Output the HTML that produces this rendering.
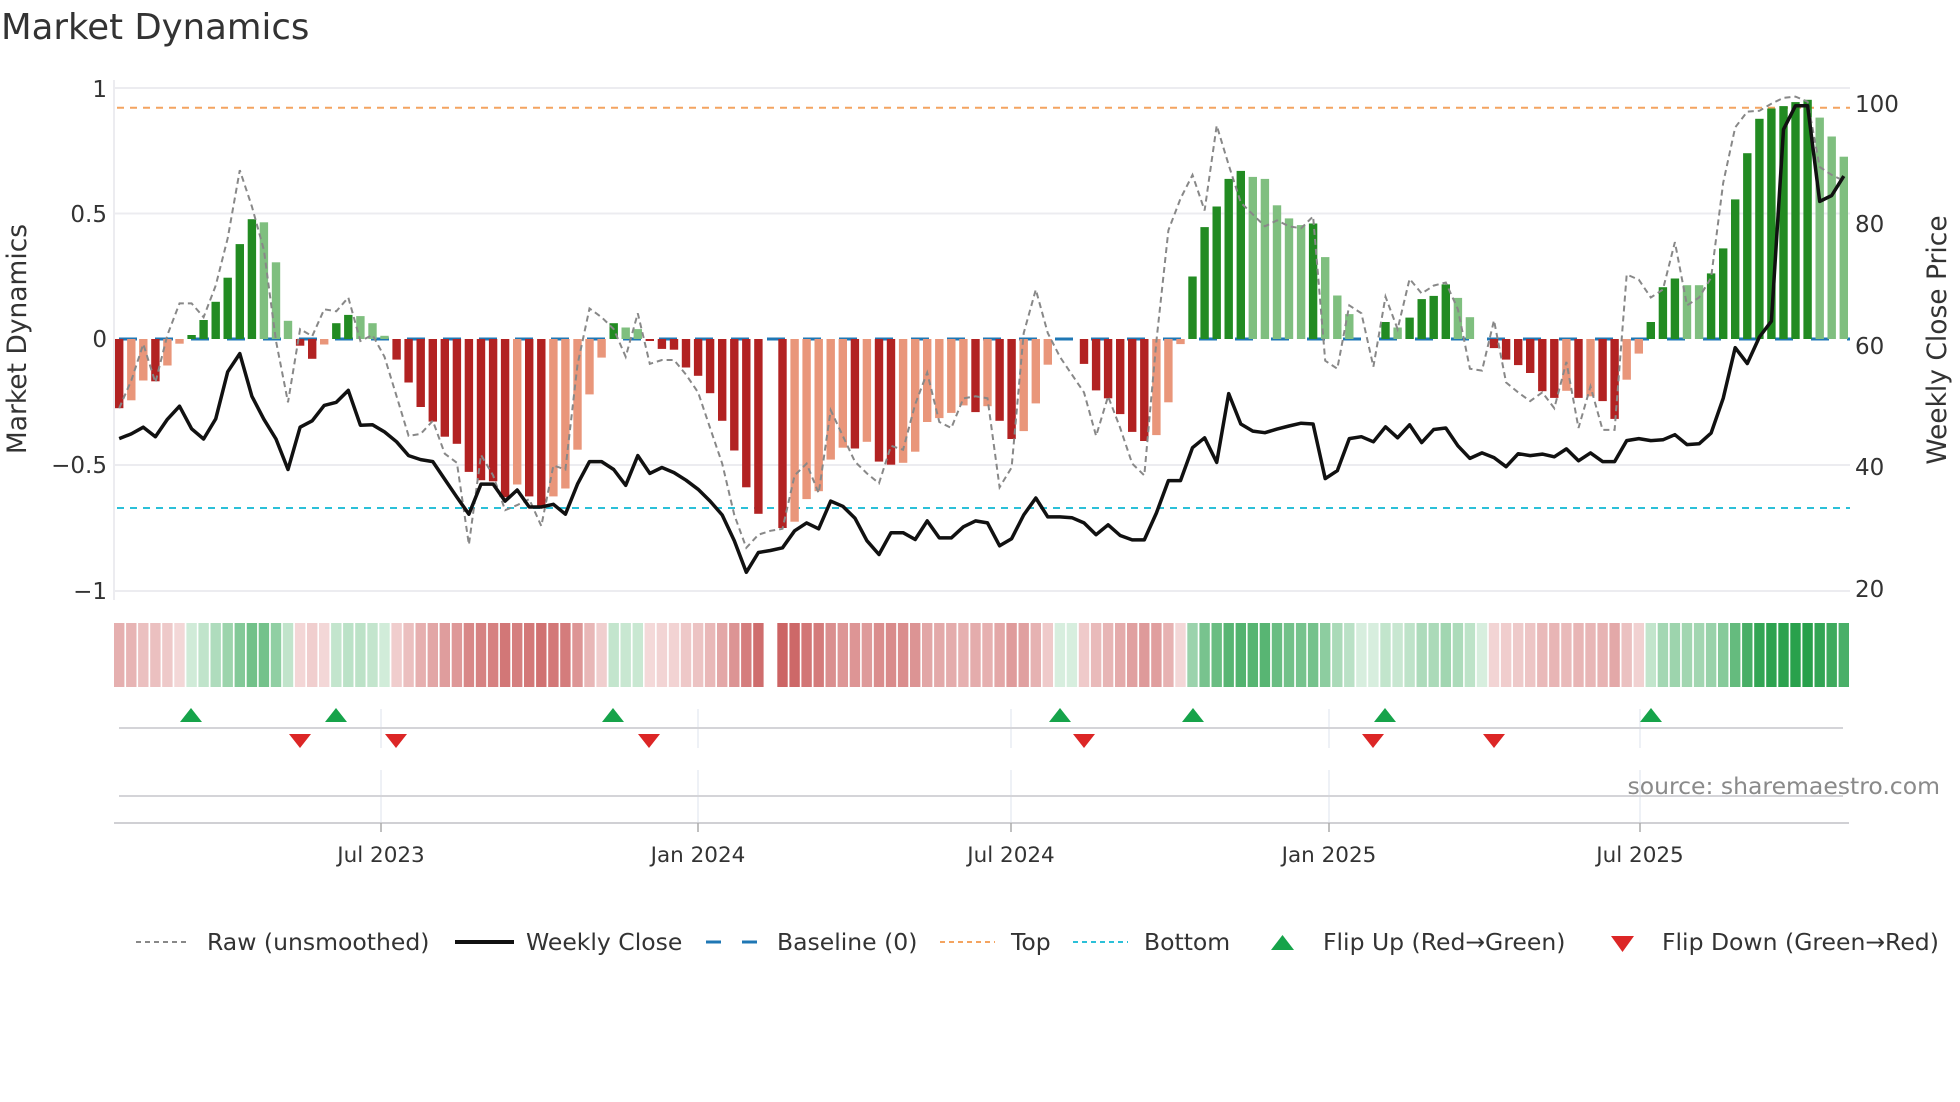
<!DOCTYPE html>
<html><head><meta charset="utf-8">
<style>
html,body{margin:0;padding:0;background:#fff;}
svg{display:block;}
text{font-family:"DejaVu Sans","Liberation Sans",sans-serif;fill:#333;}
</style></head>
<body>
<svg id="s" width="1960" height="1102" viewBox="0 0 1960 1102" xmlns="http://www.w3.org/2000/svg">
<rect width="1960" height="1102" fill="#fff"/>
<text x="1" y="39" font-size="35.5">Market Dynamics</text>
<g stroke="#ececf0" stroke-width="2">
<line x1="114" y1="88" x2="1850" y2="88"/>
<line x1="114" y1="213.5" x2="1850" y2="213.5"/>
<line x1="114" y1="465" x2="1850" y2="465"/>
<line x1="114" y1="591" x2="1850" y2="591"/>
<line x1="114" y1="80" x2="114" y2="600"/>
</g>
<g font-size="23" text-anchor="end">
<text x="107" y="97">1</text>
<text x="107" y="222">0.5</text>
<text x="107" y="347">0</text>
<text x="107" y="473">−0.5</text>
<text x="107" y="599">−1</text>
</g>
<g font-size="23">
<text x="1855" y="112">100</text>
<text x="1855" y="232">80</text>
<text x="1855" y="354">60</text>
<text x="1855" y="475">40</text>
<text x="1855" y="597">20</text>
</g>
<text transform="translate(26,339) rotate(-90)" font-size="26.5" text-anchor="middle">Market Dynamics</text>
<text transform="translate(1946,340) rotate(-90)" font-size="26.5" text-anchor="middle">Weekly Close Price</text>
<line x1="117" y1="107.7" x2="1850" y2="107.7" stroke="#f4a460" stroke-width="2" stroke-dasharray="7,6"/>
<line x1="117" y1="508" x2="1850" y2="508" stroke="#2bc0d8" stroke-width="2" stroke-dasharray="7,6"/>
<line x1="119" y1="339" x2="1850" y2="339" stroke="#1f77b4" stroke-width="3" stroke-dasharray="18,18"/>
<g id="bars"></g>
<g id="heat"></g>
<polyline id="raw" fill="none" stroke="#888" stroke-width="2" stroke-dasharray="6,4"/>
<polyline id="price" fill="none" stroke="#111" stroke-width="3.5" stroke-linejoin="round"/>
<g stroke="#e8ecf2" stroke-width="1.5">
<line x1="381" y1="709" x2="381" y2="748"/><line x1="698" y1="709" x2="698" y2="748"/>
<line x1="1011" y1="709" x2="1011" y2="748"/><line x1="1329" y1="709" x2="1329" y2="748"/>
<line x1="1640" y1="709" x2="1640" y2="748"/>
<line x1="381" y1="770" x2="381" y2="823"/><line x1="698" y1="770" x2="698" y2="823"/>
<line x1="1011" y1="770" x2="1011" y2="823"/><line x1="1329" y1="770" x2="1329" y2="823"/>
<line x1="1640" y1="770" x2="1640" y2="823"/>
</g>
<line x1="119" y1="728" x2="1843" y2="728" stroke="#d4d4d8" stroke-width="2"/>
<line x1="119" y1="796" x2="1843" y2="796" stroke="#d4d4d8" stroke-width="2"/>
<line x1="114" y1="823" x2="1849" y2="823" stroke="#d0d0d4" stroke-width="2"/>
<g stroke="#aaa" stroke-width="1.5">
<line x1="381" y1="823" x2="381" y2="832"/><line x1="698" y1="823" x2="698" y2="832"/>
<line x1="1011" y1="823" x2="1011" y2="832"/><line x1="1329" y1="823" x2="1329" y2="832"/>
<line x1="1640" y1="823" x2="1640" y2="832"/>
</g>
<g id="mk"></g>
<text x="1940" y="794" font-size="23.5" text-anchor="end" style="fill:#8a8a8a">source: sharemaestro.com</text>
<g font-size="21.5" text-anchor="middle">
<text x="381" y="862">Jul 2023</text><text x="698" y="862">Jan 2024</text>
<text x="1011" y="862">Jul 2024</text><text x="1329" y="862">Jan 2025</text>
<text x="1640" y="862">Jul 2025</text>
</g>
<line x1="136" y1="942" x2="190" y2="942" stroke="#888" stroke-width="2" stroke-dasharray="5,4"/>
<line x1="455" y1="942" x2="514" y2="942" stroke="#111" stroke-width="4"/>
<line x1="706" y1="942" x2="760" y2="942" stroke="#1f77b4" stroke-width="3" stroke-dasharray="15,21"/>
<line x1="940" y1="942" x2="995" y2="942" stroke="#f4a460" stroke-width="2" stroke-dasharray="5,4"/>
<line x1="1073" y1="942" x2="1128" y2="942" stroke="#2bc0d8" stroke-width="2" stroke-dasharray="5,4"/>
<polygon points="1271,950 1294,950 1282.5,935" fill="#16a34a"/>
<polygon points="1611,936 1634,936 1622.5,952" fill="#dc2626"/>
<g font-size="23.5">
<text x="207" y="950">Raw (unsmoothed)</text>
<text x="526" y="950">Weekly Close</text>
<text x="777" y="950">Baseline (0)</text>
<text x="1011" y="950">Top</text>
<text x="1144" y="950">Bottom</text>
<text x="1323" y="950">Flip Up (Red→Green)</text>
<text x="1662" y="950">Flip Down (Green→Red)</text>
</g>
</svg>
<script>
(function(){
var NS="http://www.w3.org/2000/svg";
var bz=[830,810,760,762,722,667,645,607,561,500,415,352,360,461,609,672,705,669,615,594,597,615,647,707,765,827,864,902,920,991,1012,1015,1055,1023,1053,1080,1053,1033,935,795,702,615,626,630,660,680,682,727,748,792,
862,937,1030,1097,null,1133,1117,1060,1040,960,930,932,915,965,973,968,940,865,855,842,823,840,825,862,908,888,818,720,655,655,718,785,805,845,890,913,898,815,668,497,372,320,250,230,245,250,317,350,367,
363,448,545,592,655,655,612,626,601,554,546,517,551,600,655,678,707,721,741,787,804,786,804,800,812,857,758,692,612,524,502,519,519,489,426,302,185,98,72,66,56,50,95,143,194];
var bt="RSSRSSGGGGGGLLLRRSGGLLLRRRRRRRRRRSRRSSSSSGLLRRRRRR"+"RRRR-RSSSSSRSRRSSSSSSRSRRSSS--RRRRRRSSSGGGGGLLLLL"+"GLLL--GLGGGGLL-RRRRRRSRSRRSSGGGLLGGGGGGGGGLLL";
var col={R:"#b22222",S:"#e9967a",G:"#228b22",L:"#7fbf7f"};
var pz=[907,895,878,902,858,825,882,908,857,738,692,800,858,908,985,878,862,823,815,785,873,872,890,915,950,960,965,1010,1055,1098,1022,1022,1065,1037,1080,1080,1073,1098,1022,965,965,985,1025,950,995,980,993,1012,1035,1065,
1100,1165,1245,1195,1190,1183,1140,1120,1135,1065,1078,1108,1165,1200,1145,1145,1162,1115,1158,1158,1130,1115,1120,1178,1160,1100,1057,1105,1105,1107,1120,1150,1125,1152,1163,1163,1095,1013,1013,930,905,967,793,870,888,892,883,875,868,
870,1008,988,907,902,915,877,905,872,917,884,880,925,957,943,955,978,945,950,946,953,933,963,943,965,965,912,907,912,910,897,922,920,893,805,677,717,650,610,125,65,65,307,292,243];
var rz=[830,760,668,765,645,565,565,600,520,400,228,320,430,660,815,630,648,580,585,550,660,645,700,800,900,895,862,945,968,1175,948,1000,1088,1075,1060,1128,975,985,720,578,600,630,700,590,718,708,708,745,790,880,
970,1100,1183,1150,1140,1135,1000,970,1045,835,900,965,995,1020,925,935,820,740,865,880,805,800,805,1030,980,640,530,640,700,745,790,900,800,880,970,1000,660,380,300,240,330,115,215,310,340,370,355,370,375,
345,710,730,570,590,725,548,630,503,540,520,512,580,730,735,608,765,790,812,790,830,713,880,775,885,885,492,505,550,530,410,570,550,500,260,120,80,78,60,45,42,55,220,240,255];
function X(i){return 119.2+i*12.06;}
function Y(z){return 80+z/2.529;}
var bars=document.getElementById("bars"),heat=document.getElementById("heat");
for(var i=0;i<144;i++){
 var z=bz[i],t=bt[i];
 if(z===null) continue;
 var y=Y(z),v=(339-y)/251.5;
 if(t!=="-"){
  var r=document.createElementNS(NS,"rect");
  var ytop=Math.min(y,339),hh=Math.abs(339-y);
  r.setAttribute("x",(X(i)-4.2).toFixed(1));r.setAttribute("y",ytop.toFixed(1));r.setAttribute("width","8.4");r.setAttribute("height",Math.max(hh,0.5).toFixed(1));
  r.setAttribute("fill",col[t]);bars.appendChild(r);
 }
 var c,a;
 if(t==="-"||v>=0){a=Math.min(Math.abs(v)/0.95,1);a=Math.pow(a,0.8);
   c="rgb("+Math.round(215-175*a)+","+Math.round(238-78*a)+","+Math.round(222-147*a)+")";}
 else {a=Math.min(Math.abs(v)/0.75,1);
   c="rgb("+Math.round(244-40*a)+","+Math.round(218-118*a)+","+Math.round(218-118*a)+")";}
 var h2=document.createElementNS(NS,"rect");
 h2.setAttribute("x",(X(i)-5.2).toFixed(1));h2.setAttribute("y","623");h2.setAttribute("width","10.4");h2.setAttribute("height","64");
 h2.setAttribute("fill",c);heat.appendChild(h2);
}
var p=[],q=[];
for(var j=0;j<144;j++){p.push(X(j).toFixed(1)+","+Y(pz[j]).toFixed(1));q.push(X(j).toFixed(1)+","+Y(rz[j]).toFixed(1));}
document.getElementById("price").setAttribute("points",p.join(" "));
document.getElementById("raw").setAttribute("points",q.join(" "));
var mk=document.getElementById("mk"),s="";
[191,336,613,1060,1193,1385,1651].forEach(function(x){s+='<polygon points="'+(x-11)+',722 '+(x+11)+',722 '+x+',708" fill="#16a34a"/>';});
[300,396,649,1084,1373,1494].forEach(function(x){s+='<polygon points="'+(x-11)+',734 '+(x+11)+',734 '+x+',748" fill="#dc2626"/>';});
mk.innerHTML=s;
})();
</script>
</body></html>
